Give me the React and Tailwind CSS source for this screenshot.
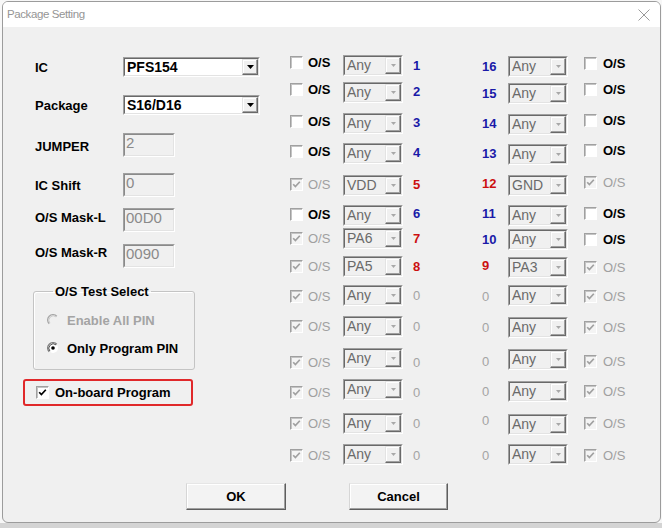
import React from "react";

const OFF = {
  "-4": "mb-[8px]",
  "-3": "mb-[6px]",
  "-2": "mb-[4px]",
  "-1": "mb-[2px]",
  "0": "",
  "1": "mt-[2px]",
  "2": "mt-[4px]",
  "3": "mt-[6px]",
  "4": "mt-[8px]",
};

const NUMCLS = {
  blue: "font-bold text-[#1a1aa8]",
  red: "font-bold text-[#cc1010]",
  gray: "font-normal text-[#a4a4a4]",
};

function CheckBox({ checked, disabled }) {
  return (
    <span
      className={`inline-flex w-[13px] h-[13px] shrink-0 items-center justify-center border border-t-[#a0a0a0] border-l-[#a0a0a0] border-r-white border-b-white shadow-[inset_1px_1px_0_#c4c4c4] ${
        disabled ? "bg-[#f4f4f4]" : "bg-white"
      }`}
    >
      {checked && (
        <svg width="9" height="9" viewBox="0 0 9 9">
          <path
            d="M1.2 4.2 L3.4 6.6 L7.8 1.8"
            fill="none"
            stroke={disabled ? "#a0a0a0" : "#000"}
            strokeWidth="1.7"
          />
        </svg>
      )}
    </span>
  );
}

function Radio({ checked, disabled }) {
  return (
    <svg width="12" height="12" viewBox="0 0 12 12" className="shrink-0">
      <circle cx="6" cy="6" r="5" fill={disabled ? "#f0f0f0" : "#ffffff"} />
      <path
        d="M2.2 9.8 A5.3 5.3 0 0 1 9.8 2.2"
        fill="none"
        stroke={disabled ? "#a8a8a8" : "#808080"}
        strokeWidth="1.3"
      />
      <path
        d="M2.9 9.1 A4.4 4.4 0 0 1 9.1 2.9"
        fill="none"
        stroke={disabled ? "#c8c8c8" : "#404040"}
        strokeWidth="0.9"
      />
      {checked && <circle cx="6" cy="6" r="1.8" fill="#000" />}
    </svg>
  );
}

function Combo({ value, enabled, wide }) {
  return (
    <div
      className={`flex shrink-0 border border-t-[#a0a0a0] border-l-[#a0a0a0] border-r-white border-b-white ${
        wide ? "w-[137px] h-[20px]" : "w-[60px] h-[21px]"
      }`}
    >
      <div
        className={`flex flex-1 border border-t-[#696969] border-l-[#696969] border-r-[#e3e3e3] border-b-[#e3e3e3] ${
          enabled ? "bg-white" : "bg-[#f0f0f0]"
        }`}
      >
        <div
          className={`flex flex-1 items-center pl-[2px] overflow-hidden whitespace-nowrap ${
            enabled
              ? "text-[14px] font-bold text-black"
              : "text-[14px] font-normal text-[#6a6a6a]"
          }`}
        >
          {value}
        </div>
        <div className="flex w-[16px] items-center justify-center bg-[#f0f0f0] border border-t-[#e3e3e3] border-l-[#e3e3e3] border-r-[#696969] border-b-[#696969] shadow-[inset_-1px_-1px_0_#a0a0a0,inset_1px_1px_0_#ffffff]">
          {enabled ? (
            <svg width="7" height="4" viewBox="0 0 7 4">
              <path d="M0 0 H7 L3.5 4 Z" fill="#000" />
            </svg>
          ) : (
            <svg width="5" height="3" viewBox="0 0 5 3">
              <path d="M0 0 H5 L2.5 3 Z" fill="#a8a8a8" />
            </svg>
          )}
        </div>
      </div>
    </div>
  );
}

function TextBox({ value }) {
  return (
    <div className="w-[52px] h-[24px] shrink-0 border border-t-[#a0a0a0] border-l-[#a0a0a0] border-r-white border-b-white">
      <div className="w-full h-full bg-[#f0f0f0] border border-t-[#8a8a8a] border-l-[#8a8a8a] border-r-[#e3e3e3] border-b-[#e3e3e3] pl-[1px] text-[15px] leading-[16px] font-normal text-[#8a8a8a]">
        {value}
      </div>
    </div>
  );
}

const MID = [
  { mt: "mt-[28px]", c: false, d: false, v: "Any", n: "1", col: "blue", co: -3, no: 0 },
  { mt: "mt-[6px]", c: false, d: false, v: "Any", n: "2", col: "blue", co: -3, no: -1 },
  { mt: "mt-[10px]", c: false, d: false, v: "Any", n: "3", col: "blue", co: -2, no: -1 },
  { mt: "mt-[9px]", c: false, d: false, v: "Any", n: "4", col: "blue", co: -2, no: -1 },
  { mt: "mt-[11px]", c: true, d: true, v: "VDD", n: "5", col: "red", co: -1, no: -1 },
  { mt: "mt-[9px]", c: false, d: false, v: "Any", n: "6", col: "blue", co: -1, no: -2 },
  { mt: "mt-[2px]", c: true, d: true, v: "PA6", n: "7", col: "red", co: 0, no: 0 },
  { mt: "mt-[7px]", c: true, d: true, v: "PA5", n: "8", col: "red", co: 0, no: 0 },
  { mt: "mt-[8px]", c: true, d: true, v: "Any", n: "0", col: "gray", co: 1, no: 0 },
  { mt: "mt-[10px]", c: true, d: true, v: "Any", n: "0", col: "gray", co: 0, no: 0 },
  { mt: "mt-[11px]", c: true, d: true, v: "Any", n: "0", col: "gray", co: 4, no: 4 },
  { mt: "mt-[10px]", c: true, d: true, v: "Any", n: "0", col: "gray", co: 3, no: 3 },
  { mt: "mt-[13px]", c: true, d: true, v: "Any", n: "0", col: "gray", co: 0, no: 0 },
  { mt: "mt-[10px]", c: true, d: true, v: "Any", n: "0", col: "gray", co: 1, no: 1 },
];

const RIGHT = [
  { mt: "mt-[29px]", c: false, d: false, v: "Any", n: "16", col: "blue", co: -3, no: 0 },
  { mt: "mt-[6px]", c: false, d: false, v: "Any", n: "15", col: "blue", co: -4, no: 0 },
  { mt: "mt-[10px]", c: false, d: false, v: "Any", n: "14", col: "blue", co: -4, no: -1 },
  { mt: "mt-[9px]", c: false, d: false, v: "Any", n: "13", col: "blue", co: -4, no: -1 },
  { mt: "mt-[10px]", c: true, d: true, v: "GND", n: "12", col: "red", co: -3, no: -2 },
  { mt: "mt-[9px]", c: false, d: false, v: "Any", n: "11", col: "blue", co: -2, no: -2 },
  { mt: "mt-[3px]", c: false, d: false, v: "Any", n: "10", col: "blue", co: 0, no: 0 },
  { mt: "mt-[7px]", c: true, d: true, v: "PA3", n: "9", col: "red", co: 0, no: -2 },
  { mt: "mt-[7px]", c: true, d: true, v: "Any", n: "0", col: "gray", co: 1, no: 1 },
  { mt: "mt-[11px]", c: true, d: true, v: "Any", n: "0", col: "gray", co: 0, no: 0 },
  { mt: "mt-[11px]", c: true, d: true, v: "Any", n: "0", col: "gray", co: 2, no: 2 },
  { mt: "mt-[11px]", c: true, d: true, v: "Any", n: "0", col: "gray", co: 0, no: 0 },
  { mt: "mt-[12px]", c: true, d: true, v: "Any", n: "0", col: "gray", co: -1, no: -4 },
  { mt: "mt-[9px]", c: true, d: true, v: "Any", n: "0", col: "gray", co: 1, no: 1 },
];

function OSLabel({ disabled }) {
  return (
    <span
      className={
        disabled ? "font-normal text-[#a0a0a0]" : "font-bold text-black"
      }
    >
      O/S
    </span>
  );
}

function MidRow({ r }) {
  return (
    <div className={`flex items-center h-[21px] ${r.mt}`}>
      <div className={`flex items-center w-[53px] ${OFF[String(r.co)]}`}>
        <CheckBox checked={r.c} disabled={r.d} />
        <span className="ml-[5px]">
          <OSLabel disabled={r.d} />
        </span>
      </div>
      <Combo value={r.v} />
      <span className={`ml-[10px] ${NUMCLS[r.col]} ${OFF[String(r.no)]}`}>
        {r.n}
      </span>
    </div>
  );
}

function RightRow({ r }) {
  return (
    <div className={`flex items-center h-[21px] ${r.mt}`}>
      <span className={`w-[26px] ${NUMCLS[r.col]} ${OFF[String(r.no)]}`}>
        {r.n}
      </span>
      <Combo value={r.v} />
      <div className={`flex items-center ml-[16px] ${OFF[String(r.co)]}`}>
        <CheckBox checked={r.c} disabled={r.d} />
        <span className="ml-[6px]">
          <OSLabel disabled={r.d} />
        </span>
      </div>
    </div>
  );
}

function LabelRow({ mt, label, off, children, h }) {
  return (
    <div className={`flex items-center ${mt} ${h}`}>
      <span className={`w-[88px] font-bold text-black ${off}`}>{label}</span>
      {children}
    </div>
  );
}

function Button({ children, w }) {
  return (
    <button
      className={`${w} h-[27px] bg-[#f3f3f3] border border-t-[#e6e6e6] border-l-[#d6d6d6] border-r-[#5e5e5e] border-b-[#5e5e5e] shadow-[inset_-1px_-1px_0_#a0a0a0,inset_1px_1px_0_#ffffff] font-bold text-[13px] text-black`}
    >
      {children}
    </button>
  );
}

export default function App() {
  return (
    <div className="w-[662px] h-[528px] flex flex-col bg-[#f7f7f7] overflow-hidden font-['Liberation_Sans',Arial,sans-serif] text-[13px] leading-[15px]">
      <div className="ml-[2px] mt-[1px] w-[659px] h-[522px] flex flex-col border border-[#9c9c9c] rounded-[6px] overflow-hidden bg-[#f0f0f0]">
        {/* Title bar */}
        <div className="h-[25px] shrink-0 flex items-center justify-between bg-white pl-[4px] pr-[10px]">
          <span className="text-[11.5px] text-[#959595] tracking-[-0.4px]">
            Package Setting
          </span>
          <svg width="12" height="12" viewBox="0 0 12 12">
            <path
              d="M0.5 0.5 L11.5 11.5 M11.5 0.5 L0.5 11.5"
              stroke="#9a9a9a"
              strokeWidth="1"
              fill="none"
            />
          </svg>
        </div>

        {/* Body */}
        <div className="flex flex-col flex-1">
          <div className="flex items-start">
            {/* Left column */}
            <div className="w-[287px] shrink-0 flex flex-col pl-[32px]">
              <LabelRow mt="mt-[30px]" h="h-[20px]" label="IC" off="">
                <Combo value="PFS154" enabled wide />
              </LabelRow>
              <LabelRow mt="mt-[18px]" h="h-[20px]" label="Package" off="">
                <Combo value="S16/D16" enabled wide />
              </LabelRow>
              <LabelRow mt="mt-[18px]" h="h-[24px]" label="JUMPER" off="mt-[2px]">
                <TextBox value="2" />
              </LabelRow>
              <LabelRow mt="mt-[16px]" h="h-[24px]" label="IC Shift" off="">
                <TextBox value="0" />
              </LabelRow>
              <LabelRow mt="mt-[11px]" h="h-[24px]" label="O/S Mask-L" off="mb-[6px]">
                <TextBox value="00D0" />
              </LabelRow>
              <LabelRow mt="mt-[12px]" h="h-[24px]" label="O/S Mask-R" off="mb-[8px]">
                <TextBox value="0090" />
              </LabelRow>

              <fieldset className="ml-[-2px] mt-[16px] w-[162px] border border-[#c4c4c4] rounded-[3px] pl-[13px] pb-[13px] shadow-[inset_1px_1px_0_#ffffff]">
                <legend className="ml-[6px] px-[2px] font-bold text-black leading-[15px]">
                  O/S Test Select
                </legend>
                <div className="flex items-center h-[16px] mt-[13px]">
                  <Radio disabled />
                  <span className="ml-[8px] font-bold text-[#a4a4a4]">
                    Enable All PIN
                  </span>
                </div>
                <div className="flex items-center h-[16px] mt-[12px]">
                  <Radio checked />
                  <span className="ml-[8px] font-bold text-black">
                    Only Program PIN
                  </span>
                </div>
              </fieldset>

              <div className="ml-[-12px] mt-[9px] w-[170px] h-[27px] border-2 border-[#e0282a] rounded-[3px] flex items-center pl-[11px]">
                <CheckBox checked />
                <span className="ml-[6px] font-bold text-black">
                  On-board Program
                </span>
              </div>
            </div>

            {/* Middle column */}
            <div className="w-[192px] shrink-0 flex flex-col">
              {MID.map((r, i) => (
                <MidRow key={i} r={r} />
              ))}
            </div>

            {/* Right column */}
            <div className="flex flex-col">
              {RIGHT.map((r, i) => (
                <RightRow key={i} r={r} />
              ))}
            </div>
          </div>

          {/* Buttons */}
          <div className="flex mt-[18px] pl-[183px] gap-[63px]">
            <Button w="w-[100px]">OK</Button>
            <Button w="w-[99px]">Cancel</Button>
          </div>
        </div>
      </div>
      <div className="flex-1 bg-[#d4d4d4]" />
    </div>
  );
}
